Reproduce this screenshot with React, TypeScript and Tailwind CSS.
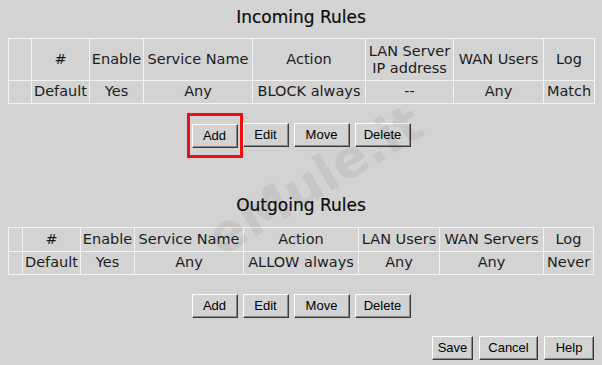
const cell =
  "flex items-center justify-center text-center whitespace-nowrap border-r border-b border-[#f3f3f3]";

function RulesTable({
  cols,
  head,
  row,
  headH,
}: {
  cols: string;
  head: React.ReactNode[];
  row: string[];
  headH: string;
}) {
  return (
    <div className={`ml-[8px] w-fit grid ${cols} border-l border-t border-[#f3f3f3] text-[14.5px] text-[#1c1c1c]`}>
      {head.map((h, i) => (
        <div key={"h" + i} className={`${cell} ${headH} leading-[17px]`}>
          {h}
        </div>
      ))}
      {row.map((r, i) => (
        <div key={"r" + i} className={`${cell} h-[23px]`}>
          {r}
        </div>
      ))}
    </div>
  );
}

function Btn({ label, w }: { label: string; w: string }) {
  return (
    <button
      className={`${w} h-[24px] bg-[#d3d3d3] border border-t-white border-l-white border-r-[#3a3a3a] border-b-[#3a3a3a] shadow-[inset_-1px_-1px_0_#8a8a8a] text-[13px] text-black [font-family:'Liberation_Sans',Arial,sans-serif]`}
    >
      {label}
    </button>
  );
}

export default function App() {
  return (
    <div className="relative w-[602px] h-[365px] overflow-hidden bg-[#d3d3d3] [font-family:'DejaVu_Sans',Verdana,sans-serif]">
      {/* Incoming */}
      <div className="h-[38px] pt-[7px] text-center text-[17px] leading-[20px] text-[#0c0c0c] [-webkit-text-stroke:0.2px_#0c0c0c]">
        Incoming Rules
      </div>
      <RulesTable
        cols="grid-cols-[23px_58px_54px_109px_113px_88px_90px_51px]"
        headH="h-[42px]"
        head={[
          "",
          "#",
          "Enable",
          "Service Name",
          "Action",
          <span key="lan">
            LAN Server
            <br />
            IP address
          </span>,
          "WAN Users",
          "Log",
        ]}
        row={["", "Default", "Yes", "Any", "BLOCK always", "--", "Any", "Match"]}
      />
      <div className="mt-[19px] flex justify-center gap-[5px]">
        <div className="relative">
          <Btn label="Add" w="w-[46px]" />
          <span className="absolute -left-[5px] -right-[5px] -top-[10px] -bottom-[10px] border-[3px] border-[#ee1010]" />
        </div>
        <Btn label="Edit" w="w-[46px]" />
        <Btn label="Move" w="w-[56px]" />
        <Btn label="Delete" w="w-[56px]" />
      </div>

      {/* Outgoing */}
      <div className="mt-[47px] h-[20px] text-center text-[17px] leading-[20px] text-[#0c0c0c] [-webkit-text-stroke:0.2px_#0c0c0c]">
        Outgoing Rules
      </div>
      <div className="mt-[12px]">
        <RulesTable
          cols="grid-cols-[14px_58px_54px_109px_115px_81px_104px_50px]"
          headH="h-[24px]"
          head={["", "#", "Enable", "Service Name", "Action", "LAN Users", "WAN Servers", "Log"]}
          row={["", "Default", "Yes", "Any", "ALLOW always", "Any", "Any", "Never"]}
        />
      </div>
      <div className="mt-[19px] flex justify-center gap-[5px]">
        <Btn label="Add" w="w-[46px]" />
        <Btn label="Edit" w="w-[46px]" />
        <Btn label="Move" w="w-[56px]" />
        <Btn label="Delete" w="w-[56px]" />
      </div>
      <div className="mt-[18px] flex justify-end gap-[6px] pr-[8px]">
        <Btn label="Save" w="w-[41px]" />
        <Btn label="Cancel" w="w-[59px]" />
        <Btn label="Help" w="w-[50px]" />
      </div>

      {/* watermark */}
      <span className="pointer-events-none absolute left-[315px] top-[180px] -translate-x-1/2 -translate-y-1/2 -rotate-[31deg] whitespace-nowrap text-[52px] font-bold text-black/[0.06]">
        eMule.it
      </span>
    </div>
  );
}
